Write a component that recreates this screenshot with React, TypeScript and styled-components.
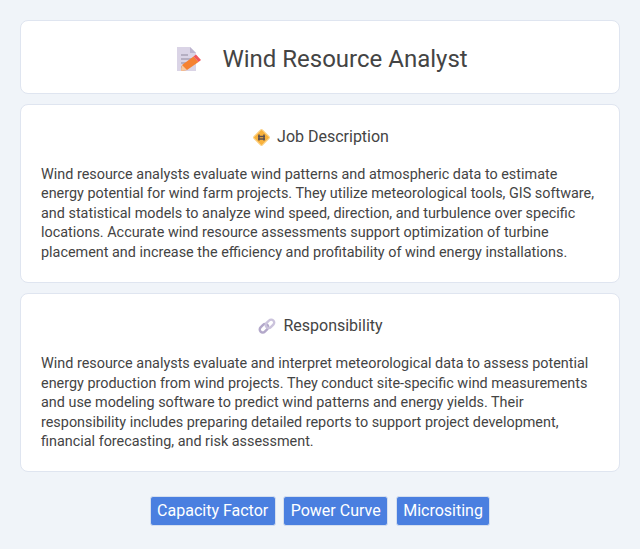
import React from 'react';
import styled, { createGlobalStyle } from 'styled-components';

const GlobalStyle = createGlobalStyle`
  html, body {
    margin: 0;
    padding: 0;
    background-color: #f0f4f9;
    font-family: Roboto, "Liberation Sans", sans-serif;
    color: #444;
    overflow: hidden;
  }
`;

const Page = styled.div`
  display: flex;
  flex-direction: column;
  gap: 10px;
  padding: 20px 20px 0;
  height: 549px;
  box-sizing: border-box;
`;

const Card = styled.section`
  background-color: #fff;
  border: 1px solid #dfe5f0;
  border-radius: 8px;
  padding: 20px;
`;

const HeaderCard = styled(Card)`
  display: flex;
  align-items: center;
  justify-content: center;
  height: 74px;
  box-sizing: border-box;
  padding: 3px 0 0;
`;

const PageTitle = styled.h1`
  margin: 0 0 0 20px;
  font-size: 24px;
  line-height: 32px;
  font-weight: 400;
  color: #444;
`;

const SectionHeading = styled.h2`
  display: flex;
  align-items: center;
  justify-content: center;
  gap: 6px;
  margin: 0 0 17px;
  height: 23px;
  font-size: 16px;
  font-weight: 400;
  color: #444;
`;

const Body = styled.p`
  margin: 0;
  font-size: 14.4px;
  line-height: 19.44px;
  color: #444;
`;

const TagRow = styled.div`
  display: flex;
  justify-content: center;
  gap: 7.3px;
  margin-top: 13.5px;
`;

const Tag = styled.span`
  background-color: #4a7fe0;
  border: 1px solid #d5dfef;
  border-radius: 3px;
  color: #fff;
  font-size: 16px;
  line-height: 28px;
  padding: 0 6.6px;
`;

const DocIcon = () => (
  <svg width="30" height="30" viewBox="0 0 30 30">
    <path d="M5 3h13l6 6v18H5z" fill="#dad4e6" />
    <path d="M18 3l6 6h-6z" fill="#bdb5cf" />
    <path d="M9 11h7M9 15h11M9 19h8M9 23h4" stroke="#8f8a9e" strokeWidth="1.2" />
    <path d="M9 27l1-6L21.5 12.5l5 5.5L15 26z" fill="#f58232" />
    <path d="M21.5 12.5l2.5-2 5 5.5-2.5 2z" fill="#f0565c" />
    <path d="M9 27l1-6 5 5z" fill="#f7c9a0" />
  </svg>
);

const DiamondIcon = () => (
  <svg width="20" height="20" viewBox="0 0 20 20">
    <rect x="4.5" y="4.5" width="12" height="12" rx="1.5" transform="rotate(45 10.5 10.5)" fill="#f9b23c" stroke="#fbd48c" strokeWidth="1" />
    <path d="M8 7.5v6M13 7.5v6M7 9.5h7M7 12h7" stroke="#5c5050" strokeWidth="1.5" />
  </svg>
);

const LinkIcon = () => (
  <svg width="20" height="20" viewBox="0 0 20 20" fill="none">
    <rect x="2.2" y="9.2" width="9.5" height="6" rx="3" transform="rotate(-45 7 12.2)" stroke="#b3a8ca" strokeWidth="2.4" />
    <rect x="8.2" y="4.8" width="9.5" height="6" rx="3" transform="rotate(-45 13 7.8)" stroke="#cbc3dc" strokeWidth="2.4" />
  </svg>
);

const App: React.FC = () => (
  <Page>
    <GlobalStyle />
    <HeaderCard>
      <DocIcon />
      <PageTitle>Wind Resource Analyst</PageTitle>
    </HeaderCard>
    <Card>
      <SectionHeading><DiamondIcon />Job Description</SectionHeading>
      <Body>
        Wind resource analysts evaluate wind patterns and atmospheric data to estimate energy potential for wind farm projects. They utilize meteorological tools, GIS software, and statistical models to analyze wind speed, direction, and turbulence over specific locations. Accurate wind resource assessments support optimization of turbine placement and increase the efficiency and profitability of wind energy installations.
      </Body>
    </Card>
    <Card>
      <SectionHeading><LinkIcon />Responsibility</SectionHeading>
      <Body>
        Wind resource analysts evaluate and interpret meteorological data to assess potential energy production from wind projects. They conduct site-specific wind measurements and use modeling software to predict wind patterns and energy yields. Their responsibility includes preparing detailed reports to support project development, financial forecasting, and risk assessment.
      </Body>
    </Card>
    <TagRow>
      <Tag>Capacity Factor</Tag>
      <Tag>Power Curve</Tag>
      <Tag>Micrositing</Tag>
    </TagRow>
  </Page>
);

export default App;
